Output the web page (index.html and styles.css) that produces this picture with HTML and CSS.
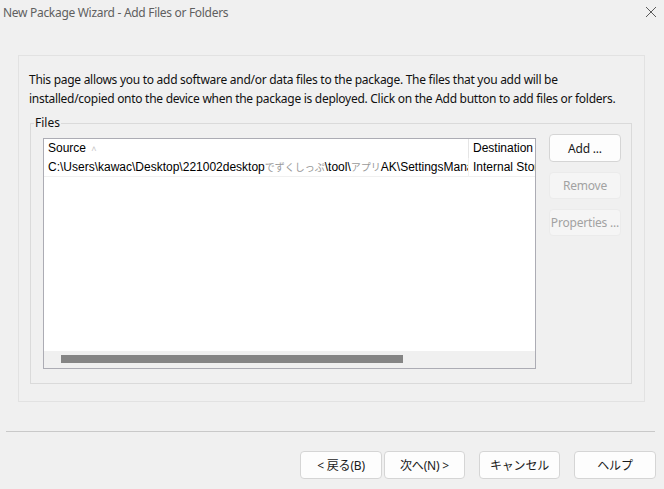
FILE: index.html
```html
<!DOCTYPE html>
<html lang="ja">
<head>
<meta charset="utf-8">
<title>New Package Wizard - Add Files or Folders</title>
<link rel="stylesheet" href="styles.css">
</head>
<body>
<div class="window">
  <div class="titlebar">
    <span class="title">New Package Wizard - Add Files or Folders</span>
    <svg class="close" width="12" height="12" viewBox="0 0 12 12"><path d="M1 1L11 11M11 1L1 11" stroke="#5a5a5a" stroke-width="1" fill="none"/></svg>
  </div>
  <div class="content">
    <div class="panel">
      <p class="desc">This page allows you to add software and/or data files to the package. The files that you add will be<br>installed/copied onto the device when the package is deployed. Click on the Add button to add files or folders.</p>
      <fieldset class="group">
        <legend class="legend">Files</legend>
        <div class="group-body">
          <div class="listview">
            <div class="lv-header">
              <div class="col col-src">Source <span class="sort">&#x2C4;</span></div>
              <div class="col col-dst">Destination</div>
            </div>
            <div class="lv-row">
              <div class="cell col-src">C:\Users\kawac\Desktop\221002desktop<span class="garble">でずくしっぷ</span>\tool\<span class="garble">アプリ</span>AK\SettingsManager.exe</div>
              <div class="cell col-dst">Internal Storage</div>
            </div>
            <div class="lv-fill"></div>
            <div class="hscroll"><div class="thumb"></div></div>
          </div>
          <div class="side-buttons">
            <button class="btn">Add ...</button>
            <button class="btn" disabled>Remove</button>
            <button class="btn" disabled>Properties ...</button>
          </div>
        </div>
      </fieldset>
    </div>
  </div>
  <div class="separator"></div>
  <div class="footer">
    <button class="btn fbtn wide">&lt; 戻る(B)</button>
    <button class="btn fbtn next">次へ(N) &gt;</button>
    <button class="btn fbtn gap">キャンセル</button>
    <button class="btn fbtn gap wide">ヘルプ</button>
  </div>
</div>
</body>
</html>
```
FILE: styles.css
```css
* { box-sizing: border-box; }
html, body {
  margin: 0;
  padding: 0;
  background: #f0f0f0;
}
body {
  font-family: "Noto Sans", "Noto Sans CJK JP", sans-serif;
  font-size: 12px;
  color: #1a1a1a;
}
.window {
  width: 664px;
  height: 489px;
  overflow: hidden;
  background: #f0f0f0;
}
.titlebar {
  height: 26px;
  display: flex;
  align-items: center;
  justify-content: space-between;
  padding: 0 7px 2px 3px;
}
.title {
  color: #5f5f5f;
  font-size: 12px;
  letter-spacing: -0.3px;
}
.close { display: block; }
.content {
  padding: 29px 19px 0 18px;
}
.panel {
  height: 347px;
  border: 1px solid #e2e2e2;
  padding: 14px 12px 0 10px;
}
.desc {
  margin: 0;
  line-height: 19px;
  color: #111;
  white-space: nowrap;
  letter-spacing: -0.28px;
}
.group {
  margin: 8px 0 0 1px;
  padding: 0 11px 0 12px;
  border: 1px solid #dadada;
  height: 268px;
  min-width: 0;
}
.legend {
  padding: 0 1px;
  margin-left: -9px;
  line-height: 14px;
  color: #111;
}
.group-body {
  display: flex;
  padding-top: 4px;
}
.listview {
  margin-top: 4px;
  width: 493px;
  height: 231px;
  border: 1px solid #acacb4;
  background: #fff;
  display: flex;
  flex-direction: column;
  font-family: "Liberation Sans", Arial, "Noto Sans CJK JP", sans-serif;
  font-size: 12px;
  color: #000;
}
.lv-header, .lv-row {
  display: flex;
  height: 19px;
  flex: none;
}
.lv-row {
  border-bottom: 1px solid #f0f0f0;
}
.col, .cell {
  white-space: nowrap;
  overflow: hidden;
  line-height: 19px;
}
.col-src {
  width: 425px;
  padding-left: 4px;
  flex: none;
}
.lv-header .col-src {
  border-right: 1px solid #e5e5e5;
}
.lv-row .col-src {
  border-right: 1px solid #f0f0f0;
  text-overflow: clip;
}
.col-dst {
  padding-left: 4px;
  flex: 1;
}
.lv-header .col { color: #000; }
.sort {
  color: #c8c8c8;
  font-size: 9px;
  margin-left: 2px;
}
.garble {
  color: #9a9a9a;
  font-size: 10px;
}
.lv-fill { flex: 1; }
.hscroll {
  height: 17px;
  flex: none;
  background: #f0f0f0;
  padding: 4px 0 0 17px;
}
.thumb {
  width: 342px;
  height: 8px;
  background: #858585;
}
.side-buttons {
  margin-left: 13px;
  display: flex;
  flex-direction: column;
  gap: 10px;
}
.btn {
  font-family: "Noto Sans", "Noto Sans CJK JP", sans-serif;
  font-size: 12px;
  letter-spacing: -0.2px;
  color: #1a1a1a;
  background: #fdfdfd;
  border: 1px solid #d5d5d5;
  border-radius: 4px;
  height: 28px;
  width: 72px;
  padding: 0;
  white-space: nowrap;
}
.btn:disabled {
  color: #a2a2a2;
  background: #f5f5f5;
  border-color: #ebebeb;
}
.side-buttons .btn:disabled {
  height: 27px;
}
.separator {
  margin: 29px 9px 0 6px;
  height: 1px;
  background: #c9c9c9;
}
.footer {
  display: flex;
  justify-content: flex-end;
  padding: 19px 8px 0 0;
}
.fbtn {
  width: 81px;
  height: 28px;
}
.fbtn.wide { width: 82px; }
.fbtn.next { margin-left: 2px; }
.fbtn.gap { margin-left: 14px; }
```
